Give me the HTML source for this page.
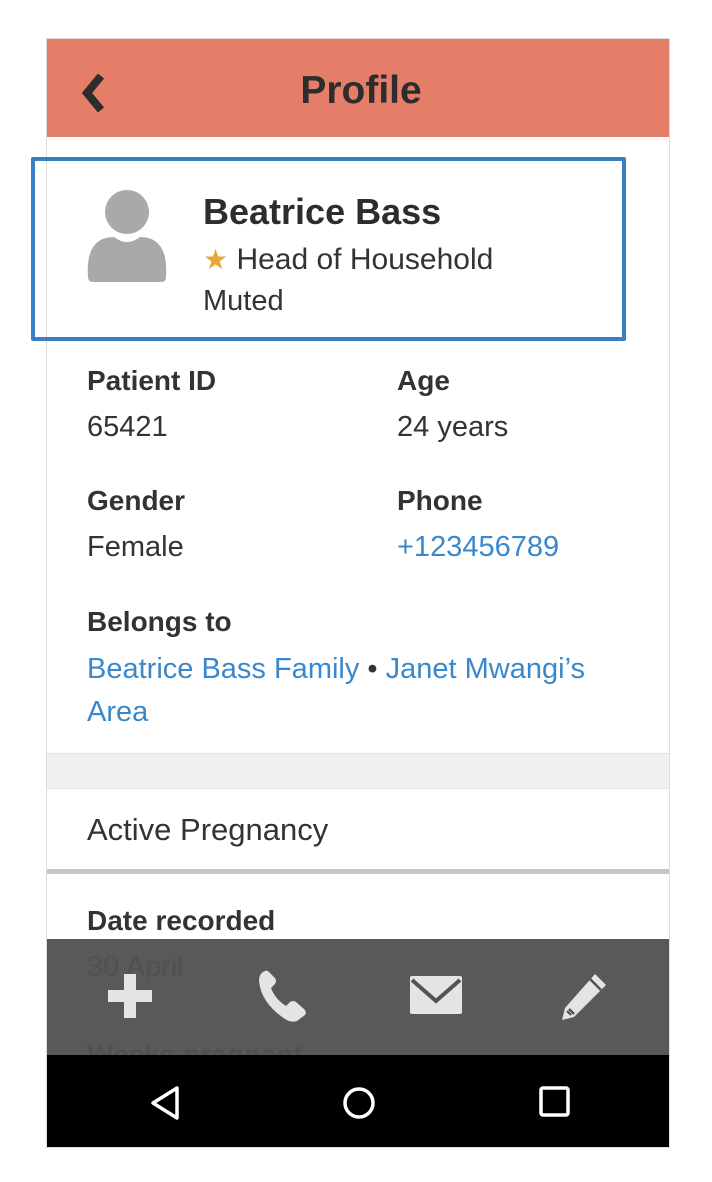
<!DOCTYPE html>
<html><head><style>
*{margin:0;padding:0;box-sizing:border-box}
body{width:712px;height:1182px;background:#fff;position:relative;font-family:"Liberation Sans",sans-serif;color:#333;overflow:hidden}
.phone{position:absolute;left:46px;top:38px;width:624px;height:1110px;border:1px solid #ddd;background:#fff;overflow:hidden}
.hdr{position:absolute;left:0;top:0;width:624px;height:98px;background:#E57E69}
.hdr .t{position:absolute;left:0;right:0;top:30px;text-align:center;font-weight:bold;font-size:39px;color:#2d2d2d;padding-left:4px}
.abs{position:absolute}
.lbl{font-weight:bold;font-size:28px;color:#333}
.val{font-size:29px;color:#333}
.link{color:#3A88CC}
.box{position:absolute;left:31px;top:157px;width:595px;height:184px;border:4px solid #3A7EC6;border-radius:2px}
</style></head><body>
<div class="phone">
 <div class="hdr">
  <svg class="abs" style="left:32px;top:32px" width="32" height="44" viewBox="0 0 32 44"><path d="M22 5 L8 22 L22 39" stroke="#2d2d2d" stroke-width="8" fill="none" stroke-linejoin="miter"/></svg>
  <div class="t">Profile</div>
 </div>
 <svg class="abs" style="left:39px;top:150px" width="84" height="94" viewBox="0 0 84 94"><circle cx="41" cy="23" r="22" fill="#a9a9ab"/><path d="M2 88 C0 60 10 48 28 48 Q41 58 54 48 C72 48 82 60 80 88 Q80 93 75 93 L7 93 Q2 93 2 88Z" fill="#a9a9ab"/></svg>
 <div class="abs" style="left:156px;top:152px;font-weight:bold;font-size:36px;color:#2d2d2d">Beatrice Bass</div>
 <div class="abs" style="left:156px;top:204px;font-size:30px"><span style="color:#E8A838;font-size:28px">★</span>&nbsp;Head of Household</div>
 <div class="abs val" style="left:156px;top:246px">Muted</div>

 <div class="abs lbl" style="left:40px;top:326px">Patient ID</div>
 <div class="abs val" style="left:40px;top:372px">65421</div>
 <div class="abs lbl" style="left:350px;top:326px">Age</div>
 <div class="abs val" style="left:350px;top:372px">24 years</div>
 <div class="abs lbl" style="left:40px;top:446px">Gender</div>
 <div class="abs val" style="left:40px;top:492px">Female</div>
 <div class="abs lbl" style="left:350px;top:446px">Phone</div>
 <div class="abs val link" style="left:350px;top:492px">+123456789</div>
 <div class="abs lbl" style="left:40px;top:567px">Belongs to</div>
 <div class="abs val" style="left:40px;top:609px;width:560px;line-height:43px"><span class="link">Beatrice Bass Family</span> • <span class="link">Janet Mwangi’s Area</span></div>

 <div class="abs" style="left:0;top:714px;width:624px;height:36px;background:#f0f0f0;border-top:1px solid #e2e2e2;border-bottom:1px solid #e2e2e2"></div>
 <div class="abs" style="left:40px;top:773px;font-size:31px;color:#333">Active Pregnancy</div>
 <div class="abs" style="left:0;top:830px;width:624px;height:5px;background:#c6c6c6"></div>
 <div class="abs lbl" style="left:40px;top:866px">Date recorded</div>
 <div class="abs val" style="left:40px;top:912px">30 April</div>
 <div class="abs lbl" style="left:40px;top:1000px">Weeks pregnant</div>

 <div class="abs" style="left:0;top:900px;width:624px;height:116px;background:rgba(82,82,82,0.96)"></div>
 <svg class="abs" style="left:60px;top:932px" width="46" height="48" viewBox="0 0 46 48"><path d="M17 3h12v16h16v12H29v16H17V31H1V19h16z" fill="#e4e4e4"/></svg>
 <svg class="abs" style="left:210px;top:930px" width="52" height="54" viewBox="0 0 52 54"><path d="M8 2 Q2 4 2 12 Q4 34 28 50 Q34 54 40 52 L48 46 Q50 43 47 40 L39 33 Q36 31 33 33 L29 37 Q18 30 14 19 L18 15 Q20 12 18 9 L12 3 Q10 1 8 2Z" fill="#e4e4e4"/></svg>
 <svg class="abs" style="left:362px;top:936px" width="54" height="40" viewBox="0 0 54 40"><rect x="1" y="1" width="52" height="38" rx="2" fill="#e4e4e4"/><path d="M3 5 L27 26 L51 5" stroke="#525252" stroke-width="4" fill="none"/></svg>
 <svg class="abs" style="left:512px;top:932px" width="50" height="52" viewBox="0 0 50 52"><path d="M36 3 L47 14 L15 46 L3 49 L6 37 Z" fill="#e4e4e4"/><path d="M31 8 L42 19 M10 38 L15 43" stroke="#525252" stroke-width="2.5"/><path d="M8 40 L12 44" stroke="#525252" stroke-width="2"/></svg>

 <div class="abs" style="left:0;top:1016px;width:624px;height:94px;background:#000"></div>
 <svg class="abs" style="left:100px;top:1044px" width="36" height="40" viewBox="0 0 36 40"><path d="M30 5 L6 20 L30 35 Z" stroke="#fff" stroke-width="3.5" fill="none" stroke-linejoin="round"/></svg>
 <svg class="abs" style="left:294px;top:1046px" width="36" height="36" viewBox="0 0 36 36"><circle cx="18" cy="18" r="14" stroke="#fff" stroke-width="3.5" fill="none"/></svg>
 <svg class="abs" style="left:490px;top:1045px" width="36" height="36" viewBox="0 0 36 36"><rect x="4" y="4" width="27" height="27" rx="2" stroke="#fff" stroke-width="3.5" fill="none"/></svg>
</div>
<div class="box"></div>
</body></html>
